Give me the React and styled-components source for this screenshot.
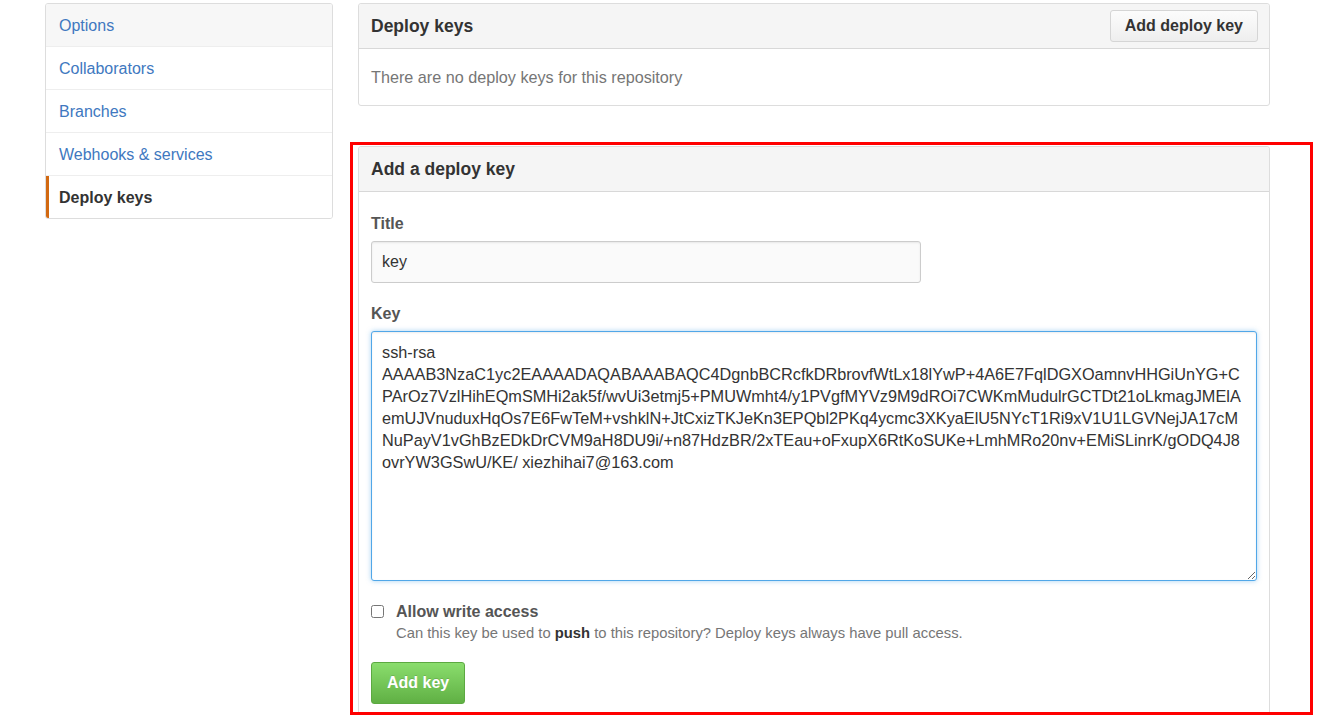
import React from 'react';
import styled, { createGlobalStyle } from 'styled-components';

const GlobalStyle = createGlobalStyle`
  html, body {
    margin: 0;
    padding: 0;
    background: #fff;
    font-family: "Liberation Sans", Arial, Helvetica, sans-serif;
    color: #333;
  }
`;

const Page = styled.div`
  display: flex;
  align-items: flex-start;
  gap: 25px;
  padding: 3px 0 0 45px;
  width: 1322px;
  box-sizing: border-box;
`;

const Menu = styled.nav`
  width: 288px;
  box-sizing: border-box;
  border: 1px solid #ddd;
  border-radius: 3px;
  overflow: hidden;
  flex-shrink: 0;
`;

const MenuItem = styled.a`
  position: relative;
  display: block;
  height: ${p => (p.$first ? 42 : 43)}px;
  line-height: ${p => (p.$first ? 43 : 44)}px;
  padding-left: 13px;
  font-size: 16px;
  text-decoration: none;
  color: ${p => (p.$selected ? '#333' : '#4078c0')};
  font-weight: ${p => (p.$selected ? 'bold' : 'normal')};
  background: ${p => (p.$shaded ? '#f7f7f7' : '#fff')};
  border-top: ${p => (p.$first ? 'none' : '1px solid #eee')};
  box-sizing: border-box;
  overflow: hidden;

  &::before {
    content: '';
    display: ${p => (p.$selected ? 'block' : 'none')};
    position: absolute;
    left: 0;
    top: 0;
    bottom: 0;
    width: 3px;
    background: #d26911;
  }
`;

const Main = styled.div`
  width: 912px;
  display: flex;
  flex-direction: column;
  gap: 40px;
`;

const Box = styled.div`
  position: relative;
  border: 1px solid #ddd;
  border-radius: 3px;
  background: #fff;
`;

const Highlight = styled.div`
  position: absolute;
  left: -9px;
  top: -5px;
  width: 963px;
  height: 573px;
  border: 3px solid #ff0000;
  box-sizing: border-box;
  pointer-events: none;
`;

const BoxHeader = styled.div`
  display: flex;
  align-items: center;
  justify-content: space-between;
  height: 44px;
  padding: 0 11px 0 12px;
  background: #f5f5f5;
  border-bottom: 1px solid #d8d8d8;
  border-radius: 3px 3px 0 0;
`;

const BoxTitle = styled.h3`
  margin: 0;
  font-size: 17.5px;
  font-weight: bold;
  color: #333;
`;

const SmallButton = styled.button`
  height: 32px;
  padding: 0 14px;
  font-family: inherit;
  font-size: 16px;
  font-weight: bold;
  color: #333;
  border: 1px solid #d5d5d5;
  border-radius: 3px;
  background: linear-gradient(#fcfcfc, #eee);
  cursor: pointer;
`;

const BlankSlate = styled.div`
  padding: 18px 12px 18px;
  font-size: 16.2px;
  line-height: 20px;
  color: #767676;
`;

const Form = styled.form`
  display: flex;
  flex-direction: column;
  padding: 22px 12px 10px;
`;

const Group = styled.div`
  display: flex;
  flex-direction: column;
  gap: 7px;
  margin-bottom: ${p => p.$mb || 20}px;
`;

const Label = styled.label`
  font-size: 16px;
  line-height: 20px;
  font-weight: bold;
  color: #555;
`;

const TextInput = styled.input`
  width: 550px;
  height: 42px;
  box-sizing: border-box;
  padding: 0 10px;
  font-family: inherit;
  font-size: 16px;
  color: #333;
  background: #fafafa;
  border: 1px solid #ccc;
  border-radius: 3px;
  box-shadow: inset 0 1px 2px rgba(0, 0, 0, 0.075);
  outline: none;
`;

const KeyArea = styled.textarea`
  width: 886px;
  height: 250px;
  box-sizing: border-box;
  padding: 9px 10px;
  font-family: inherit;
  font-size: 16.3px;
  line-height: 22px;
  color: #333;
  background: #fff;
  border: 1px solid #51a7e8;
  border-radius: 3px;
  box-shadow: inset 0 1px 2px rgba(0, 0, 0, 0.075), 0 0 5px rgba(81, 167, 232, 0.5);
  outline: none;
  white-space: pre;
  overflow: hidden;
`;

const CheckRow = styled.div`
  display: flex;
  align-items: flex-start;
  gap: 12px;
  margin-bottom: 18px;
`;

const Check = styled.input`
  margin: 3px 0 0;
  width: 13px;
  height: 13px;
`;

const CheckText = styled.div`
  display: flex;
  flex-direction: column;
`;

const CheckLabel = styled.span`
  font-size: 16px;
  line-height: 20px;
  font-weight: bold;
  color: #555;
`;

const Note = styled.p`
  margin: 1px 0 0;
  font-size: 14.8px;
  line-height: 20px;
  color: #767676;

  strong {
    color: #333;
  }
`;

const PrimaryButton = styled.button`
  align-self: flex-start;
  height: 42px;
  margin-top: 1px;
  padding: 0 15px;
  font-family: inherit;
  font-size: 16px;
  font-weight: bold;
  color: #fff;
  text-shadow: 0 -1px 0 rgba(0, 0, 0, 0.15);
  border: 1px solid #5ca941;
  border-radius: 3px;
  background: linear-gradient(#8add6d, #60b044);
  cursor: pointer;
`;

const menu = ['Options', 'Collaborators', 'Branches', 'Webhooks & services', 'Deploy keys'];

const keyText = [
  'ssh-rsa',
  'AAAAB3NzaC1yc2EAAAADAQABAAABAQC4DgnbBCRcfkDRbrovfWtLx18lYwP+4A6E7FqlDGXOamnvHHGiUnYG+C',
  'PArOz7VzlHihEQmSMHi2ak5f/wvUi3etmj5+PMUWmht4/y1PVgfMYVz9M9dROi7CWKmMudulrGCTDt21oLkmagJMElA',
  'emUJVnuduxHqOs7E6FwTeM+vshklN+JtCxizTKJeKn3EPQbl2PKq4ycmc3XKyaElU5NYcT1Ri9xV1U1LGVNejJA17cM',
  'NuPayV1vGhBzEDkDrCVM9aH8DU9i/+n87HdzBR/2xTEau+oFxupX6RtKoSUKe+LmhMRo20nv+EMiSLinrK/gODQ4J8',
  'ovrYW3GSwU/KE/ xiezhihai7@163.com',
].join('\n');

const App = () => {
  return (
    <>
      <GlobalStyle />
      <Page>
        <Menu>
          {menu.map((item, i) => (
            <MenuItem
              key={item}
              href="#"
              $first={i === 0}
              $shaded={i === 0}
              $selected={item === 'Deploy keys'}
            >
              {item}
            </MenuItem>
          ))}
        </Menu>

        <Main>
          <Box>
            <BoxHeader>
              <BoxTitle>Deploy keys</BoxTitle>
              <SmallButton type="button">Add deploy key</SmallButton>
            </BoxHeader>
            <BlankSlate>There are no deploy keys for this repository</BlankSlate>
          </Box>

          <Box>
            <Highlight />
            <BoxHeader>
              <BoxTitle>Add a deploy key</BoxTitle>
            </BoxHeader>
            <Form onSubmit={e => e.preventDefault()}>
              <Group $mb={21}>
                <Label>Title</Label>
                <TextInput type="text" defaultValue="key" />
              </Group>
              <Group $mb={21}>
                <Label>Key</Label>
                <KeyArea defaultValue={keyText} spellCheck={false} />
              </Group>
              <CheckRow>
                <Check type="checkbox" />
                <CheckText>
                  <CheckLabel>Allow write access</CheckLabel>
                  <Note>
                    Can this key be used to <strong>push</strong> to this repository? Deploy keys always have pull access.
                  </Note>
                </CheckText>
              </CheckRow>
              <PrimaryButton type="submit">Add key</PrimaryButton>
            </Form>
          </Box>
        </Main>
      </Page>
    </>
  );
};

export default App;
